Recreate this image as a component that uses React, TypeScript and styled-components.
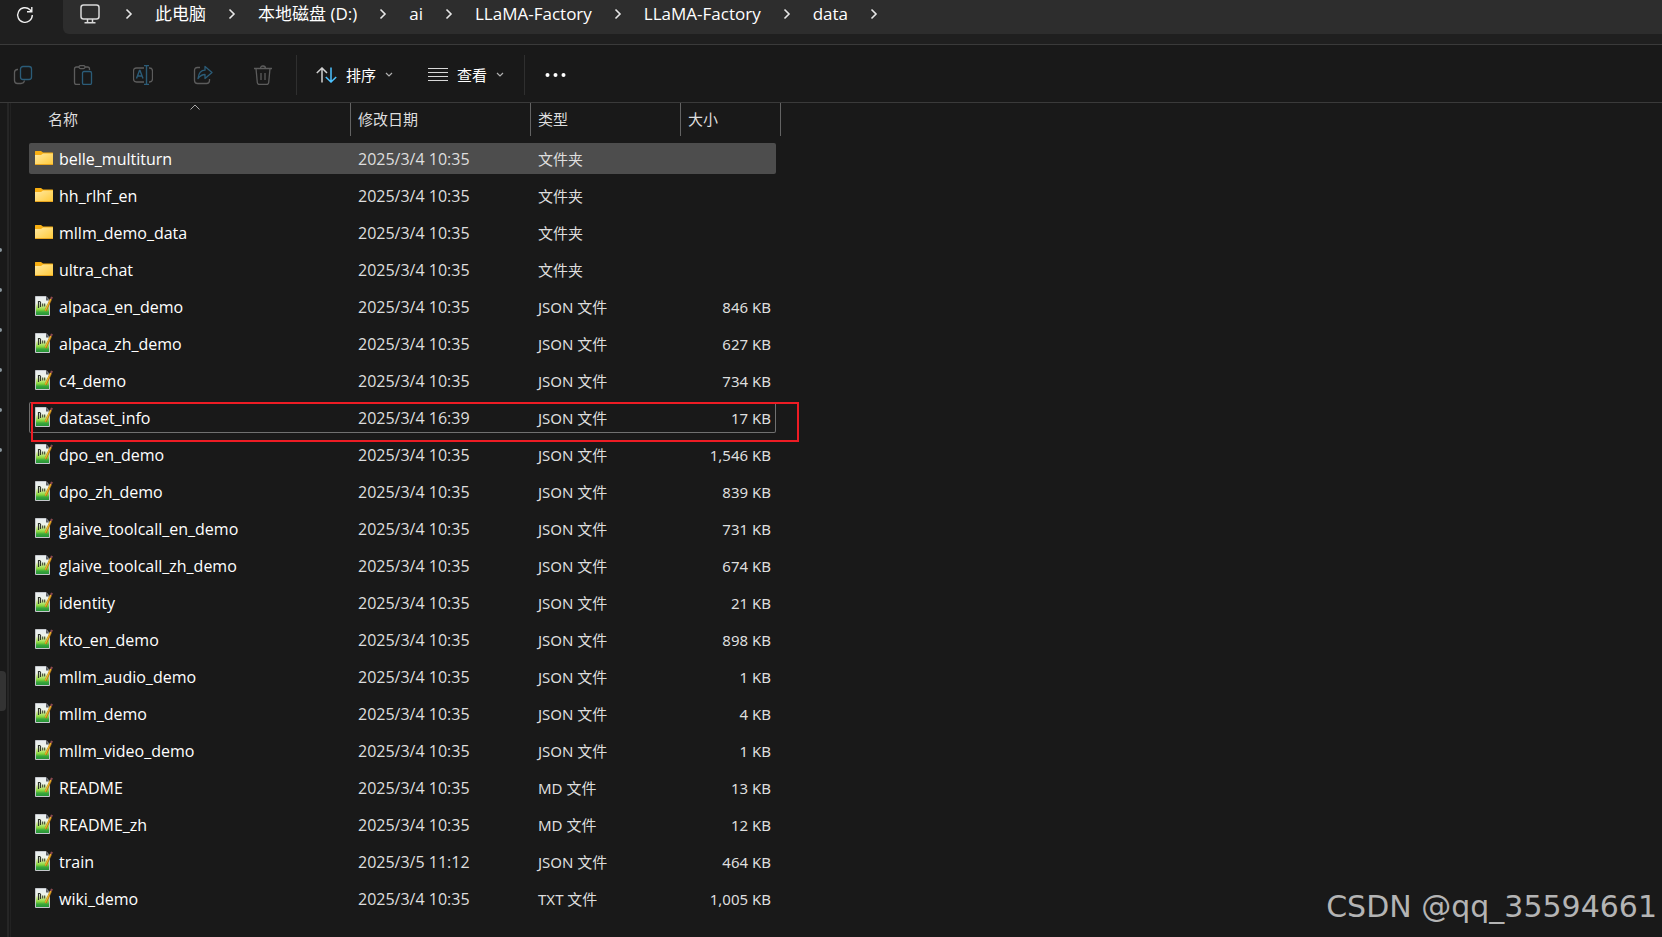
import React from 'react';
import styled, { createGlobalStyle, css } from 'styled-components';

const GlobalStyle = createGlobalStyle`
  * { box-sizing: border-box; }
  html, body, #root { min-height: 100vh; }
  body {
    margin: 0;
    background: #191919;
    color: #fff;
    font-family: "Noto Sans", "Noto Sans CJK SC", sans-serif;
    font-size: 15px;
    line-height: 20px;
  }
  button, a { color: inherit; font: inherit; text-decoration: none; }
  button { margin: 0; padding: 0; border: 0; background: none; cursor: pointer; }
  svg { display: block; flex: none; }
`;

const Window = styled.div`
  position: relative;
  min-height: 100vh;
  display: flex;
  flex-direction: column;
  overflow: hidden;
`;

const AddressBar = styled.header`
  display: flex;
  height: 45px;
  background: #1f1f1f;
  border-bottom: 1px solid #3a3a3a;
`;

const RefreshButton = styled.button`
  width: 63px;
  height: 30px;
  padding-left: 16px;
`;

const Path = styled.nav`
  flex: 1;
  height: 34px;
  padding: 0 0 6px 17px;
  display: flex;
  align-items: center;
  background: #2d2d2d;
  border-bottom-left-radius: 6px;
  font-family: "Open Sans", "Noto Sans CJK SC", sans-serif;
  font-size: 17px;
`;

const DeviceIcon = styled.svg`
  margin-right: 3px;
`;

const Crumb = styled.a`
  white-space: nowrap;
`;

const Separator = styled.span`
  width: 8px;
  margin: 0 22px;
`;

const Toolbar = styled.div`
  display: flex;
  align-items: center;
  height: 58px;
  padding: 2px 0 0 13px;
  border-bottom: 1px solid #3a3a3a;
`;

const Tools = styled.div`
  display: flex;
  gap: 40px;
  margin-right: 19px;
`;

const ToolButton = styled.button`
  width: 20px;
  height: 20px;
`;

const Divider = styled.span`
  width: 1px;
  height: 40px;
  margin-left: 4px;
  background: #2f2f2f;
`;

const MenuButton = styled.button`
  display: flex;
  align-items: center;
  gap: 9px;
  margin-left: 19px;
  padding-right: 16px;
`;

const MoreButton = styled.button`
  margin-left: 20px;
`;

const Body = styled.div`
  flex: 1;
  display: flex;
`;

const Sidebar = styled.aside`
  width: 7px;
  padding-top: 127px;
  overflow: hidden;
`;

const Pin = styled.div`
  height: 40px;
  display: flex;
  align-items: center;

  &::before {
    content: "";
    width: 4px;
    height: 4px;
    margin-left: -2px;
    border-radius: 2px;
    background: #8b979d;
  }
`;

const SidebarSelection = styled.div`
  width: 6px;
  height: 40px;
  margin-top: 201px;
  border-radius: 0 4px 4px 0;
  background: #333;
`;

const Splitter = styled.div`
  width: 4px;
  border-left: 2px solid #262626;
  border-right: 1px solid #222;
`;

const FileTable = styled.table`
  display: block;
  margin-left: 18px;
  border-collapse: separate;
  border-spacing: 0;
`;

const HeadRow = styled.tr`
  display: grid;
  grid-template-columns: 322px 180px 150px 100px;
  margin-bottom: 7px;
`;

const HeadCell = styled.th`
  position: relative;
  height: 33px;
  padding: 6px 0 0 7px;
  border-right: 1px solid #636363;
  font-weight: 400;
  text-align: left;
  color: #dedede;

  &:first-child { padding-left: 19px; }
`;

const SortMark = styled.svg`
  position: absolute;
  top: 1px;
  left: 50%;
`;

const Rows = styled.tbody`
  display: flex;
  flex-direction: column;
  gap: 6px;
  padding-bottom: 23px;
`;

const Row = styled.tr<{ $state?: 'hover' | 'focus' }>`
  position: relative;
  display: grid;
  grid-template-columns: 322px 180px 150px 95px;
  align-items: center;
  height: 31px;
  width: 747px;
  border-radius: 2px;
  ${(p) => p.$state === 'hover' && css`background: #4d4d4d;`}
  ${(p) => p.$state === 'focus' && css`box-shadow: inset 0 0 0 1px #707070;`}
`;

const Cell = styled.td<{ $right?: boolean }>`
  padding: 0 5px 0 7px;
  color: #dedede;
  white-space: nowrap;
  text-align: ${(p) => (p.$right ? 'right' : 'left')};
`;

const DateCell = styled(Cell)`
  font-family: "Open Sans", sans-serif;
  font-size: 16px;
`;

const NameCell = styled.td`
  display: flex;
  align-items: center;
  gap: 5px;
  padding: 0 0 0 5px;
  font-family: "Open Sans", sans-serif;
  font-size: 16px;
`;

const FileArt = styled.svg`
  margin-bottom: 2px;
`;

const Highlight = styled.span`
  position: absolute;
  top: 0;
  left: 2px;
  width: 768px;
  height: 40px;
  border: 2px solid #ed1c24;
  pointer-events: none;
`;

const Watermark = styled.div`
  position: absolute;
  right: 5px;
  bottom: 10px;
  font-family: "DejaVu Sans", sans-serif;
  font-size: 30px;
  line-height: 40px;
  color: #b4b4b4;
`;

const Chevron = () => (
  <svg width="8" height="12" viewBox="0 0 8 12" fill="none" stroke="#e6e6e6" strokeWidth="1.6">
    <path d="M1.5 1.5 6 6l-4.500 4.500" />
  </svg>
);

const Down = () => (
  <svg width="8" height="6" viewBox="0 0 8 6" fill="none" stroke="#b0b0b0" strokeWidth="1.200">
    <path d="m1 1 3 3 3-3" />
  </svg>
);

const FolderIcon = () => (
  <svg width="20" height="20" viewBox="0 0 20 20">
    <defs>
      <linearGradient id="folder" x1="0" y1="0" x2="1" y2="1">
        <stop offset="0" stopColor="#ffe9a2" />
        <stop offset="1" stopColor="#ffc937" />
      </linearGradient>
    </defs>
    <path d="M1 2.500Q1 2 1.500 2H7l2 1.500h9.500q.5 0 .5.5V8H1Z" fill="#f8af12" />
    <path d="M1 6h6L9 4.500h10v11q0 .5-.5.5h-17q-.5 0-.5-.5Z" fill="url(#folder)" />
    <path d="M1 15.500h18" stroke="#e8a520" />
  </svg>
);

const FileIcon = () => (
  <FileArt width="20" height="20" viewBox="0 0 20 20">
    <defs>
      <linearGradient id="sheet" x1="0" y1="0" x2="0" y2="1">
        <stop offset="0" stopColor="#e9edf2" />
        <stop offset=".35" stopColor="#eef4e8" />
        <stop offset=".5" stopColor="#cdeb8c" />
        <stop offset=".7" stopColor="#86d63c" />
        <stop offset=".82" stopColor="#3aa83c" />
        <stop offset="1" stopColor="#238f38" />
      </linearGradient>
    </defs>
    <path d="M1.500.500H12l3.500 4v15H1.500Z" fill="url(#sheet)" stroke="#c4c7cb" />
    <path d="M12 .5v4h3.500Z" fill="#5a5e64" />
    <path d="M4.500 12V5M6.500 6v5M4.500 5.500h2" stroke="#30362c" strokeWidth="1.200" fill="none" />
    <path d="M8.700 7.500v3M10.700 7.500v3" stroke="#30362c" />
    <path d="m17 3-5.500 12" stroke="#a87318" strokeWidth="2.200" />
    <path d="m16.700 3-5.300 11.500" stroke="#f2b52c" strokeWidth="1.200" />
    <path d="m18 .8-1 2.200" stroke="#8c4a50" strokeWidth="2" />
  </FileArt>
);

const dim = '#5c5c5c';
const blue = '#2b5c78';

const tools: { label: string; art: React.ReactNode }[] = [
  {
    label: '复制',
    art: (
      <>
        <path d="M5 4.500H4Q1.500 5 1.500 7.500v8q0 3 3 3H8q3 0 3.500-3" stroke={dim} />
        <rect x="7.500" y="1.500" width="11" height="13" rx="2.500" stroke={blue} />
      </>
    ),
  },
  {
    label: '粘贴',
    art: (
      <>
        <path d="M6 2H3.500q-2 0-2 2v13.500q0 2 2 2H7M12 2h2.500q2 0 2 2v1" stroke={dim} />
        <rect x="6" y=".6" width="6" height="3" rx="1.500" stroke={dim} />
        <rect x="9.500" y="6.500" width="9" height="13" rx="1.500" stroke={blue} />
      </>
    ),
  },
  {
    label: '重命名',
    art: (
      <>
        <path d="M11 3H3.500Q.5 3 .5 6v8q0 3 3 3H11M16 3h.5q3 0 3 3v8q0 3-3 3H16" stroke={dim} />
        <path d="m3.500 13.500 3-8h.5l3 8M4.500 11h4.500M11 .6h5M11 19.400h5M13.500.6v18.800" stroke={blue} strokeWidth="1.400" />
      </>
    ),
  },
  {
    label: '共享',
    art: (
      <>
        <path d="M7 2.500H4.500q-3 0-3 3v10q0 3 3 3h9q3 0 3-3V14" stroke={dim} />
        <path d="M12 1.500v3.700q-6 0-7 8.300 3-4 7-4v4l7-6Z" stroke={blue} strokeLinejoin="round" strokeWidth="1.300" />
      </>
    ),
  },
  {
    label: '删除',
    art: (
      <>
        <path d="M1 3.500h18M7.500 3.500q0-2.500 2.500-2.500t2.500 2.500M3 3.500l1.300 14q.2 2 2 2h7.400q1.800 0 2-2L17 3.500M8 8v7M12 8v7" stroke={dim} />
      </>
    ),
  },
];

const crumbs = ['此电脑', '本地磁盘 (D:)', 'ai', 'LLaMA-Factory', 'LLaMA-Factory', 'data'];

type Entry = [name: string, date: string, type: string, size: string];
const D = '2025/3/4 10:35';
const entries: Entry[] = [
  ['belle_multiturn', D, '文件夹', ''],
  ['hh_rlhf_en', D, '文件夹', ''],
  ['mllm_demo_data', D, '文件夹', ''],
  ['ultra_chat', D, '文件夹', ''],
  ['alpaca_en_demo', D, 'JSON 文件', '846 KB'],
  ['alpaca_zh_demo', D, 'JSON 文件', '627 KB'],
  ['c4_demo', D, 'JSON 文件', '734 KB'],
  ['dataset_info', '2025/3/4 16:39', 'JSON 文件', '17 KB'],
  ['dpo_en_demo', D, 'JSON 文件', '1,546 KB'],
  ['dpo_zh_demo', D, 'JSON 文件', '839 KB'],
  ['glaive_toolcall_en_demo', D, 'JSON 文件', '731 KB'],
  ['glaive_toolcall_zh_demo', D, 'JSON 文件', '674 KB'],
  ['identity', D, 'JSON 文件', '21 KB'],
  ['kto_en_demo', D, 'JSON 文件', '898 KB'],
  ['mllm_audio_demo', D, 'JSON 文件', '1 KB'],
  ['mllm_demo', D, 'JSON 文件', '4 KB'],
  ['mllm_video_demo', D, 'JSON 文件', '1 KB'],
  ['README', D, 'MD 文件', '13 KB'],
  ['README_zh', D, 'MD 文件', '12 KB'],
  ['train', '2025/3/5 11:12', 'JSON 文件', '464 KB'],
  ['wiki_demo', D, 'TXT 文件', '1,005 KB'],
];

export default function App() {
  return (
    <Window>
      <GlobalStyle />
      <AddressBar>
        <RefreshButton aria-label="刷新">
          <svg width="18" height="18" viewBox="0 0 18 18" fill="none" stroke="#f0f0f0" strokeWidth="1.400">
            <path d="M16.300 9A7.300 7.300 0 1 1 14 3.700L15.500 5.500M15.800 1v4.700H11" />
          </svg>
        </RefreshButton>
        <Path aria-label="路径">
          <DeviceIcon width="20" height="20" viewBox="0 0 20 20" fill="none" stroke="#d8d8d8" strokeWidth="1.500">
            <rect x="1" y="1" width="18" height="14" rx="2.500" />
            <path d="M7.500 15v3.500M12.500 15v3.500M4.500 18.800h11" />
          </DeviceIcon>
          {crumbs.map((text, i) => (
            <React.Fragment key={i}>
              <Separator><Chevron /></Separator>
              <Crumb href="#">{text}</Crumb>
            </React.Fragment>
          ))}
          <Separator><Chevron /></Separator>
        </Path>
      </AddressBar>
      <Toolbar>
        <Tools>
          {tools.map((t) => (
            <ToolButton key={t.label} aria-label={t.label}>
              <svg width="20" height="20" viewBox="0 0 20 20" fill="none" strokeWidth="1.300">{t.art}</svg>
            </ToolButton>
          ))}
        </Tools>
        <Divider />
        <MenuButton>
          <svg width="21" height="16" viewBox="0 0 21 16" fill="none" strokeWidth="1.500">
            <path d="M6 15.500V1M.8 6 6 1l5 5" stroke="#d0d0d0" />
            <path d="M15 .5V15M9.800 10l5.200 5 5.200-5" stroke="#4cc2ff" />
          </svg>
          排序
          <Down />
        </MenuButton>
        <MenuButton>
          <svg width="20" height="14" viewBox="0 0 20 14" stroke="#d8d8d8">
            <path d="M0 .5h20M0 4.500h20M0 8.500h20M0 12.500h20" />
          </svg>
          查看
          <Down />
        </MenuButton>
        <Divider />
        <MoreButton aria-label="更多">
          <svg width="21" height="4" viewBox="0 0 21 4" fill="#fff">
            <circle cx="2.500" cy="2" r="2" />
            <circle cx="10.500" cy="2" r="2" />
            <circle cx="18.500" cy="2" r="2" />
          </svg>
        </MoreButton>
      </Toolbar>
      <Body>
        <Sidebar>
          {Array.from({ length: 6 }, (_, i) => <Pin key={i} />)}
          <SidebarSelection />
        </Sidebar>
        <Splitter />
        <FileTable>
          <thead>
            <HeadRow>
              <HeadCell>
                名称
                <SortMark width="10" height="6" viewBox="0 0 10 6" fill="none" stroke="#a8a8a8">
                  <path d="m.5 5.500 4.500-4.500 4.500 4.500" />
                </SortMark>
              </HeadCell>
              <HeadCell>修改日期</HeadCell>
              <HeadCell>类型</HeadCell>
              <HeadCell>大小</HeadCell>
            </HeadRow>
          </thead>
          <Rows>
            {entries.map(([name, date, type, size], i) => (
              <Row key={name} $state={i === 0 ? 'hover' : name === 'dataset_info' ? 'focus' : undefined}>
                <NameCell>
                  {size ? <FileIcon /> : <FolderIcon />}
                  {name}
                  {name === 'dataset_info' && <Highlight />}
                </NameCell>
                <DateCell>{date}</DateCell>
                <Cell>{type}</Cell>
                <Cell $right>{size}</Cell>
              </Row>
            ))}
          </Rows>
        </FileTable>
      </Body>
      <Watermark>CSDN @qq_35594661</Watermark>
    </Window>
  );
}
